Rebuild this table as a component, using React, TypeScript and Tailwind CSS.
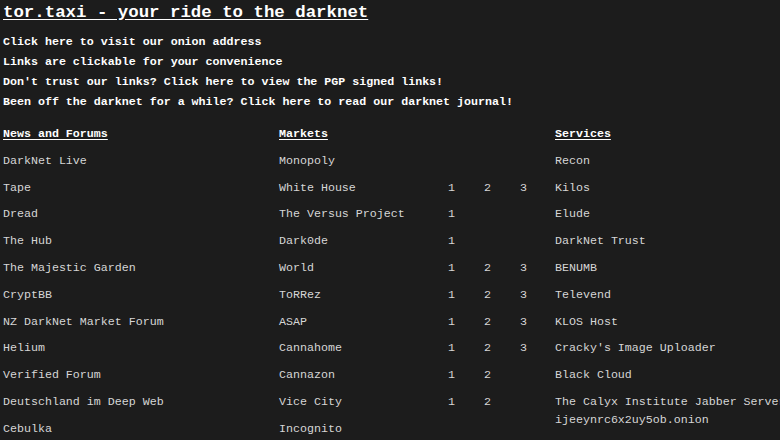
import React from "react";

const news = [
  "DarkNet Live",
  "Tape",
  "Dread",
  "The Hub",
  "The Majestic Garden",
  "CryptBB",
  "NZ DarkNet Market Forum",
  "Helium",
  "Verified Forum",
  "Deutschland im Deep Web",
  "Cebulka",
];

const markets: [string, number][] = [
  ["Monopoly", 0],
  ["White House", 3],
  ["The Versus Project", 1],
  ["Dark0de", 1],
  ["World", 3],
  ["ToRRez", 3],
  ["ASAP", 3],
  ["Cannahome", 3],
  ["Cannazon", 2],
  ["Vice City", 2],
  ["Incognito", 0],
];

const services = [
  "Recon",
  "Kilos",
  "Elude",
  "DarkNet Trust",
  "BENUMB",
  "Televend",
  "KLOS Host",
  "Cracky's Image Uploader",
  "Black Cloud",
  "The Calyx Institute Jabber Server ijeeynrc6x2uy5ob.onion",
];

const cell = "py-[4.4px] leading-[18px]";
const head = "py-[4.4px] leading-[18px] font-bold text-white underline underline-offset-2";

export default function App() {
  return (
    <div
      className="w-[780px] h-[440px] overflow-hidden bg-[#1c1c1c] text-[#d6d6d6] text-[11.65px] pl-[3px] pt-[3px]"
      style={{ fontFamily: '"Liberation Mono", "Courier New", monospace' }}
    >
      <h1 className="text-[17.4px] leading-[20px] font-bold text-white underline underline-offset-2">
        tor.taxi - your ride to the darknet
      </h1>
      <div className="mt-[9px] font-bold text-white leading-[20px]">
        <div>Click here to visit our onion address</div>
        <div>Links are clickable for your convenience</div>
        <div>Don't trust our links? Click here to view the PGP signed links!</div>
        <div>Been off the darknet for a while? Click here to read our darknet journal!</div>
      </div>
      <div className="mt-[8.7px] flex items-start">
        <div className="w-[276px] shrink-0 flex flex-col">
          <div className={head}>News and Forums</div>
          {news.map((n) => (
            <div key={n} className={cell}>
              {n}
            </div>
          ))}
        </div>
        <div className="w-[276px] shrink-0 flex flex-col">
          <div className={head}>Markets</div>
          {markets.map(([n, c]) => (
            <div key={n} className={`${cell} grid grid-cols-[169px_36px_36px_35px]`}>
              <span>{n}</span>
              <span>{c >= 1 ? "1" : ""}</span>
              <span>{c >= 2 ? "2" : ""}</span>
              <span>{c >= 3 ? "3" : ""}</span>
            </div>
          ))}
        </div>
        <div className="w-[240px] shrink-0 flex flex-col">
          <div className={head}>Services</div>
          {services.map((n) => (
            <div key={n} className={cell}>
              {n}
            </div>
          ))}
        </div>
      </div>
    </div>
  );
}
